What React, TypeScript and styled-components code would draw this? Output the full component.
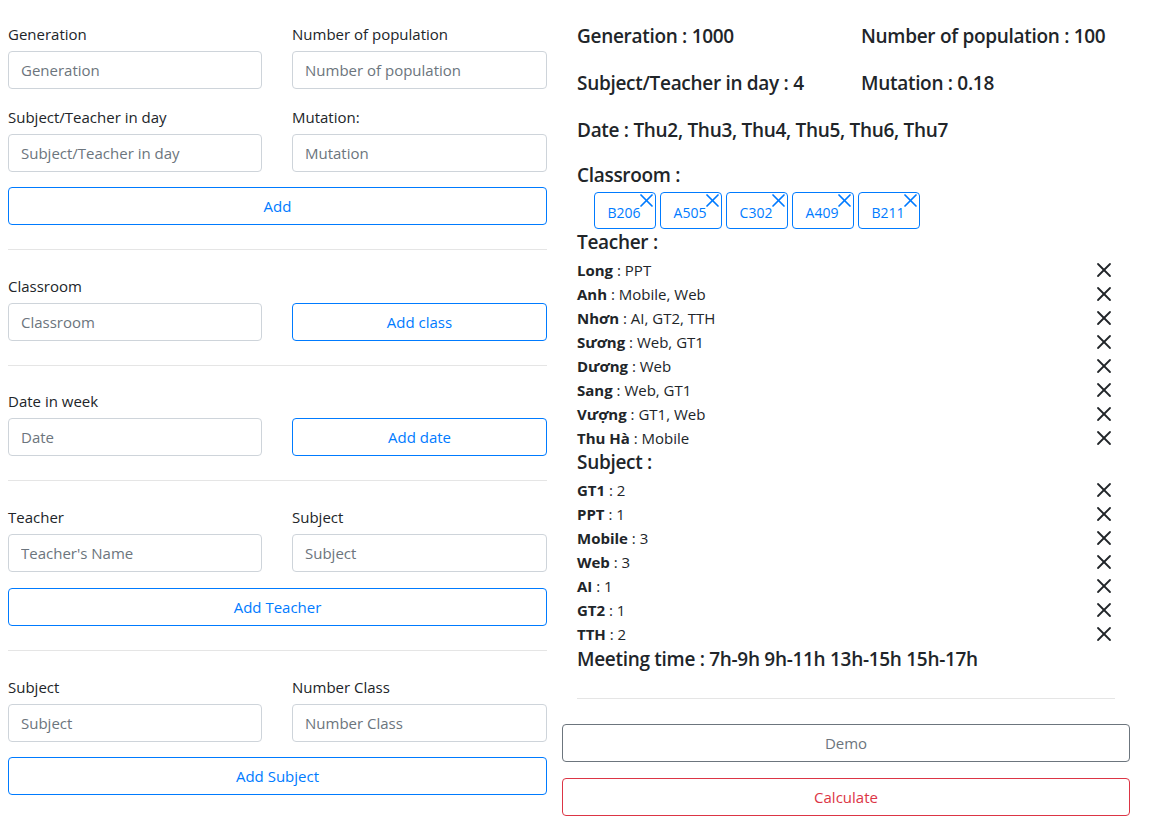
import React from "react";
import styled, { createGlobalStyle } from "styled-components";

const GlobalStyle = createGlobalStyle`
  * { box-sizing: border-box; }
  body {
    margin: 0;
    background: #fff;
    color: #212529;
    font-family: "Open Sans", "Noto Sans", "Liberation Sans", sans-serif;
    font-size: 16px;
  }
`;

const Page = styled.div`
  display: flex;
  gap: 15px;
  padding: 0 8px;
  width: 1161px;
`;

const LeftColumn = styled.div`
  width: 539px;
  padding-top: 22px;
  display: flex;
  flex-direction: column;
`;

const FormRow = styled.div<{ $mb?: number }>`
  display: grid;
  grid-template-columns: 254px 255px;
  column-gap: 30px;
  align-items: end;
  margin-bottom: ${(p) => p.$mb ?? 0}px;
`;

const Field = styled.div`
  display: flex;
  flex-direction: column;
`;

const Label = styled.label`
  font-size: 15px;
  line-height: 24px;
  margin-bottom: 5px;
  color: #212529;
`;

const Input = styled.input`
  height: 38px;
  width: 100%;
  padding: 6px 12px;
  font-family: inherit;
  font-size: 15px;
  border: 1px solid #ced4da;
  border-radius: 4px;
  color: #495057;
  background: #fff;
  &::placeholder { color: #6c757d; }
`;

const OutlineButton = styled.button<{ $tone?: "primary" | "secondary" | "danger" }>`
  height: 38px;
  width: 100%;
  font-family: inherit;
  font-size: 15px;
  background: #fff;
  border-radius: 4px;
  cursor: pointer;
  color: ${(p) => (p.$tone === "secondary" ? "#6c757d" : p.$tone === "danger" ? "#dc3545" : "#007bff")};
  border: 1px solid ${(p) => (p.$tone === "secondary" ? "#6c757d" : p.$tone === "danger" ? "#dc3545" : "#007bff")};
`;

const Divider = styled.hr<{ $top?: number; $bottom?: number; $inset?: boolean }>`
  border: 0;
  border-top: 1px solid rgba(0, 0, 0, 0.1);
  margin: ${(p) => p.$top ?? 24}px ${(p) => (p.$inset ? "15px" : "0")} ${(p) => p.$bottom ?? 24}px;
`;

const RightColumn = styled.div`
  width: 568px;
  padding-top: 24px;
  display: flex;
  flex-direction: column;
`;

const InfoGrid = styled.div`
  display: grid;
  grid-template-columns: 284px 284px;
  row-gap: 23px;
  margin-bottom: 21px;
`;

const InfoCell = styled.div<{ $span?: boolean }>`
  padding: 0 15px;
  grid-column: ${(p) => (p.$span ? "1 / span 2" : "auto")};
  font-size: 19px;
  font-weight: 600;
  line-height: 24px;
  letter-spacing: -0.3px;
  white-space: nowrap;
`;

const Details = styled.div`
  padding: 0 15px;
  display: flex;
  flex-direction: column;
`;

const SectionTitle = styled.div<{ $mt?: number }>`
  font-size: 19px;
  font-weight: 600;
  line-height: 24px;
  letter-spacing: -0.3px;
  margin-top: ${(p) => p.$mt ?? 0}px;
`;

const ChipRow = styled.div`
  display: flex;
  gap: 4px;
  padding-left: 17px;
  margin: 5px 0 1px;
`;

const Chip = styled.div`
  position: relative;
  width: 62px;
  height: 37px;
  border: 1px solid #007bff;
  border-radius: 4px;
  color: #007bff;
  font-size: 14px;
  display: flex;
  align-items: center;
  justify-content: center;
  padding-top: 4px;
  padding-right: 2px;
`;

const ChipClose = styled.svg`
  position: absolute;
  top: 0px;
  right: 1px;
`;

const List = styled.div`
  display: flex;
  flex-direction: column;
  margin-top: 4px;
`;

const ListRow = styled.div`
  display: flex;
  align-items: center;
  justify-content: space-between;
  height: 24px;
  font-size: 15px;
`;

const RowText = styled.span`
  color: #212529;
`;

const Name = styled.b`
  font-weight: 700;
`;

const CloseIcon = styled.svg`
  margin-right: 3px;
`;

const ActionStack = styled.div`
  display: flex;
  flex-direction: column;
  gap: 16px;
`;

const Cross = ({ size = 16, color = "#212529", width = 1.8 }: { size?: number; color?: string; width?: number }) => (
  <>
    <line x1="2" y1="2" x2={size - 2} y2={size - 2} stroke={color} strokeWidth={width} strokeLinecap="round" />
    <line x1={size - 2} y1="2" x2="2" y2={size - 2} stroke={color} strokeWidth={width} strokeLinecap="round" />
  </>
);

const teachers: [string, string][] = [
  ["Long", "PPT"],
  ["Anh", "Mobile, Web"],
  ["Nhơn", "AI, GT2, TTH"],
  ["Sương", "Web, GT1"],
  ["Dương", "Web"],
  ["Sang", "Web, GT1"],
  ["Vượng", "GT1, Web"],
  ["Thu Hà", "Mobile"],
];

const subjects: [string, string][] = [
  ["GT1", "2"],
  ["PPT", "1"],
  ["Mobile", "3"],
  ["Web", "3"],
  ["AI", "1"],
  ["GT2", "1"],
  ["TTH", "2"],
];

const rooms = ["B206", "A505", "C302", "A409", "B211"];

export default function App() {
  return (
    <>
      <GlobalStyle />
      <Page>
        <LeftColumn>
          <FormRow $mb={16}>
            <Field>
              <Label>Generation</Label>
              <Input placeholder="Generation" />
            </Field>
            <Field>
              <Label>Number of population</Label>
              <Input placeholder="Number of population" />
            </Field>
          </FormRow>
          <FormRow $mb={15}>
            <Field>
              <Label>Subject/Teacher in day</Label>
              <Input placeholder="Subject/Teacher in day" />
            </Field>
            <Field>
              <Label>Mutation:</Label>
              <Input placeholder="Mutation" />
            </Field>
          </FormRow>
          <OutlineButton>Add</OutlineButton>
          <Divider />
          <FormRow>
            <Field>
              <Label>Classroom</Label>
              <Input placeholder="Classroom" />
            </Field>
            <OutlineButton>Add class</OutlineButton>
          </FormRow>
          <Divider $bottom={23} />
          <FormRow>
            <Field>
              <Label>Date in week</Label>
              <Input placeholder="Date" />
            </Field>
            <OutlineButton>Add date</OutlineButton>
          </FormRow>
          <Divider />
          <FormRow $mb={16}>
            <Field>
              <Label>Teacher</Label>
              <Input placeholder="Teacher's Name" />
            </Field>
            <Field>
              <Label>Subject</Label>
              <Input placeholder="Subject" />
            </Field>
          </FormRow>
          <OutlineButton>Add Teacher</OutlineButton>
          <Divider />
          <FormRow $mb={15}>
            <Field>
              <Label>Subject</Label>
              <Input placeholder="Subject" />
            </Field>
            <Field>
              <Label>Number Class</Label>
              <Input placeholder="Number Class" />
            </Field>
          </FormRow>
          <OutlineButton>Add Subject</OutlineButton>
        </LeftColumn>

        <RightColumn>
          <InfoGrid>
            <InfoCell>Generation : 1000</InfoCell>
            <InfoCell>Number of population : 100</InfoCell>
            <InfoCell>Subject/Teacher in day : 4</InfoCell>
            <InfoCell>Mutation : 0.18</InfoCell>
            <InfoCell $span>Date : Thu2, Thu3, Thu4, Thu5, Thu6, Thu7</InfoCell>
          </InfoGrid>
          <Details>
            <SectionTitle>Classroom :</SectionTitle>
            <ChipRow>
              {rooms.map((r) => (
                <Chip key={r}>
                  {r}
                  <ChipClose width="15" height="15" viewBox="0 0 15 15">
                    <Cross size={15} color="#007bff" width={1.7} />
                  </ChipClose>
                </Chip>
              ))}
            </ChipRow>
            <SectionTitle>Teacher :</SectionTitle>
            <List>
              {teachers.map(([n, s]) => (
                <ListRow key={n}>
                  <RowText>
                    <Name>{n}</Name> : {s}
                  </RowText>
                  <CloseIcon width="16" height="16" viewBox="0 0 16 16">
                    <Cross />
                  </CloseIcon>
                </ListRow>
              ))}
            </List>
            <SectionTitle>Subject :</SectionTitle>
            <List>
              {subjects.map(([n, c]) => (
                <ListRow key={n}>
                  <RowText>
                    <Name>{n}</Name> : {c}
                  </RowText>
                  <CloseIcon width="16" height="16" viewBox="0 0 16 16">
                    <Cross />
                  </CloseIcon>
                </ListRow>
              ))}
            </List>
            <SectionTitle $mt={1}>Meeting time : 7h-9h 9h-11h 13h-15h 15h-17h</SectionTitle>
          </Details>
          <Divider $inset $top={27} $bottom={25} />
          <ActionStack>
            <OutlineButton $tone="secondary">Demo</OutlineButton>
            <OutlineButton $tone="danger">Calculate</OutlineButton>
          </ActionStack>
        </RightColumn>
      </Page>
    </>
  );
}
